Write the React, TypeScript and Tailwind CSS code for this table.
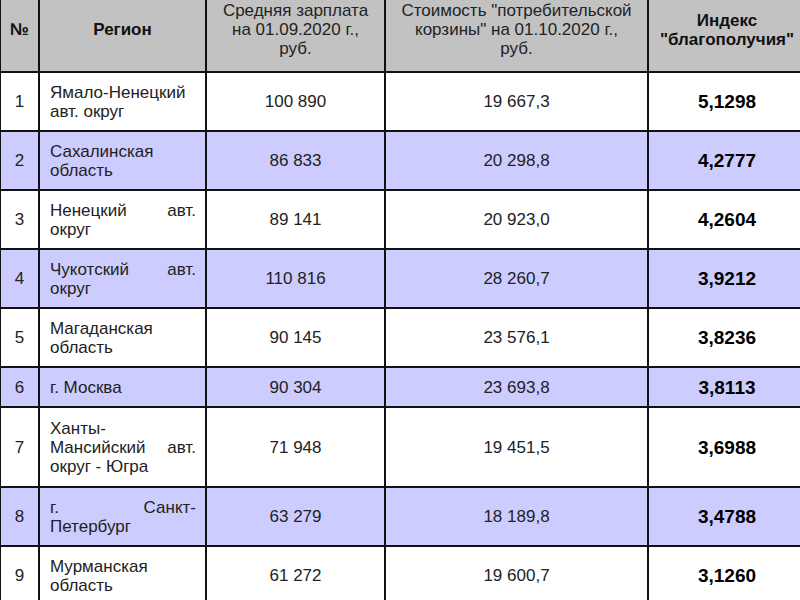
const rows = [
  { n: '1', region: 'Ямало-Ненецкий авт. округ', salary: '100 890', basket: '19 667,3', index: '5,1298', h: 'h-[59px]' },
  { n: '2', region: 'Сахалинская область', salary: '86 833', basket: '20 298,8', index: '4,2777', h: 'h-[59px]' },
  { n: '3', region: 'Ненецкий авт. округ', salary: '89 141', basket: '20 923,0', index: '4,2604', h: 'h-[59px]' },
  { n: '4', region: 'Чукотский авт. округ', salary: '110 816', basket: '28 260,7', index: '3,9212', h: 'h-[59px]' },
  { n: '5', region: 'Магаданская область', salary: '90 145', basket: '23 576,1', index: '3,8236', h: 'h-[59px]' },
  { n: '6', region: 'г. Москва', salary: '90 304', basket: '23 693,8', index: '3,8113', h: 'h-[40px]' },
  { n: '7', region: 'Ханты-Мансийский авт. округ - Югра', salary: '71 948', basket: '19 451,5', index: '3,6988', h: 'h-[80px]' },
  { n: '8', region: 'г. Санкт-Петербург', salary: '63 279', basket: '18 189,8', index: '3,4788', h: 'h-[59px]' },
  { n: '9', region: 'Мурманская область', salary: '61 272', basket: '19 600,7', index: '3,1260', h: 'h-[59px]' },
];

export default function App() {
  return (
    <div className="w-[800px] h-[600px] overflow-hidden bg-white font-['Liberation_Sans',Arial,sans-serif] text-[17px] leading-[19px] text-[#222]">
      <table className="-mt-[14px] -ml-[1px] w-[806px] table-fixed border-collapse">
        <colgroup>
          <col className="w-[39px]" />
          <col className="w-[167px]" />
          <col className="w-[179px]" />
          <col className="w-[263px]" />
          <col className="w-[158px]" />
        </colgroup>
        <thead>
          <tr className="h-[85px] bg-[#c2c2c2]">
            <th className="border-2 border-[#111] font-bold text-center align-middle text-[#111]">№</th>
            <th className="border-2 border-[#111] font-bold text-center align-middle text-[#111]">Регион</th>
            <th className="border-2 border-[#111] font-normal text-center align-middle">
              Средняя зарплата
              <br />
              на 01.09.2020 г.,
              <br />
              руб.
            </th>
            <th className="border-2 border-[#111] font-normal text-center align-middle whitespace-nowrap">
              Стоимость "потребительской
              <br />
              корзины" на 01.10.2020 г.,
              <br />
              руб.
            </th>
            <th className="border-2 border-[#111] font-bold text-center align-middle text-[#111]">
              Индекс
              <br />
              "благополучия"
            </th>
          </tr>
        </thead>
        <tbody>
          {rows.map((r, i) => (
            <tr key={r.n} className={`${r.h} ${i % 2 === 1 ? 'bg-[#ccccff]' : 'bg-white'}`}>
              <td className="border-2 border-[#111] text-center align-middle">{r.n}</td>
              <td className="border-2 border-[#111] align-middle pl-[10px] pr-[9px] text-justify">{r.region}</td>
              <td className="border-2 border-[#111] text-center align-middle">{r.salary}</td>
              <td className="border-2 border-[#111] text-center align-middle">{r.basket}</td>
              <td className="border-2 border-[#111] text-center align-middle font-bold text-[19px] text-black">{r.index}</td>
            </tr>
          ))}
        </tbody>
      </table>
    </div>
  );
}
